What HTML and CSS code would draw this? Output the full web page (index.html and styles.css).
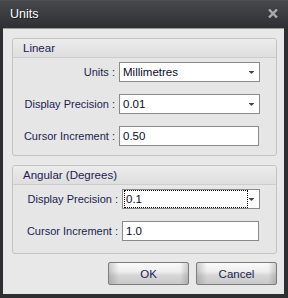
FILE: index.html
```html
<!DOCTYPE html>
<html>
<head>
<meta charset="utf-8">
<link rel="stylesheet" href="styles.css">
</head>
<body>
<div class="window">
  <div class="titlebar">
    <span class="title">Units</span>
    <svg class="close" width="10" height="9" viewBox="0 0 10 9"><path d="M1 0.5 L9 8.5 M9 0.5 L1 8.5" stroke="#a9abae" stroke-width="2.4" fill="none"/></svg>
  </div>
  <div class="content">
    <div class="group">
      <div class="group-head">Linear</div>
      <div class="group-body linear">
        <div class="row">
          <span class="label">Units :</span>
          <div class="select"><span class="value">Millimetres</span><svg class="arrow" width="5" height="3" viewBox="0 0 5 3"><path d="M0 0h5v1H0z M0.5 1h4L2.5 3z" fill="#444"/></svg></div>
        </div>
        <div class="row">
          <span class="label">Display Precision :</span>
          <div class="select"><span class="value">0.01</span><svg class="arrow" width="5" height="3" viewBox="0 0 5 3"><path d="M0 0h5v1H0z M0.5 1h4L2.5 3z" fill="#444"/></svg></div>
        </div>
        <div class="row">
          <span class="label">Cursor Increment :</span>
          <div class="input">0.50</div>
        </div>
      </div>
    </div>
    <div class="group angular">
      <div class="group-head">Angular (Degrees)</div>
      <div class="group-body">
        <div class="row">
          <span class="label">Display Precision :</span>
          <div class="select"><span class="value focus">0.1</span><svg class="arrow" width="5" height="3" viewBox="0 0 5 3"><path d="M0 0h5v1H0z M0.5 1h4L2.5 3z" fill="#444"/></svg></div>
        </div>
        <div class="row">
          <span class="label">Cursor Increment :</span>
          <div class="input">1.0</div>
        </div>
      </div>
    </div>
    <div class="buttons">
      <div class="btn">OK</div>
      <div class="btn">Cancel</div>
    </div>
  </div>
</div>
</body>
</html>
```
FILE: styles.css
```css
* { box-sizing: border-box; }
html, body { margin: 0; padding: 0; }
body { width: 288px; height: 298px; overflow: hidden; background: #2c2d30; font-family: "Liberation Sans", Arial, sans-serif; font-size: 11px; }

.window {
  width: 288px; height: 298px;
  background: #2e2f33;
  display: flex; flex-direction: column;
}
.titlebar {
  height: 28px; flex: none;
  background: linear-gradient(#55575b 0px, #46484c 1px, #3a3c40 14px, #2f3034 28px);
  display: flex; align-items: center; justify-content: space-between;
  padding: 0 10px 0 10px;
}
.title { color: #ffffff; font-size: 12.5px; text-shadow: 1px 1px 0 #1a1a1a; margin-top: -1px; }
.close { margin-top: -1px; }

.content {
  flex: none;
  margin: 0 4px 4px 3px;
  height: 266px;
  background: #e8e8e8;
  border-top: 1px solid #9c9c9c;
  padding: 9px 7px 9px 9px;
  display: flex; flex-direction: column;
}
.group {
  border: 1px solid #c3c3c3;
  border-radius: 3px;
  background: #e6e6e6;
}
.group.angular { margin-top: 9px; }
.group-head {
  height: 19px;
  border-bottom: 1px solid #cdcdcd;
  background: linear-gradient(#ececec, #dedede);
  border-radius: 2px 2px 0 0;
  color: #1c1c50;
  padding-left: 10px;
  line-height: 18px;
  font-size: 11.5px;
}
.group-body {
  display: flex; flex-direction: column; gap: 12px;
  padding: 4px 16px 12px 0;
}
.group-body.linear { padding-bottom: 9px; }
.row { display: flex; align-items: center; height: 20px; }
.label {
  width: 106px; flex: none;
  text-align: right; padding-right: 4px;
  color: #1c1c50; font-size: 11px;
}
.angular .label { width: 109px; }
.select, .input {
  height: 20px;
  border: 1px solid #8a8a8a;
  background: #ffffff;
  color: #0a0a28;
  font-size: 11.5px;
  display: flex; align-items: center;
}
.select { width: 141px; padding: 0 5px 0 2px; justify-content: space-between; }
.input { width: 140px; padding-left: 3px; }
.angular .select { width: 138px; }
.angular .input { width: 137px; }
.value { padding-left: 1px; line-height: 14px; }
.value.focus {
  outline: 1px dotted #000;
  outline-offset: 0;
  width: 122px; height: 16px; line-height: 16px;
}
.arrow { flex: none; }

.buttons {
  display: flex; justify-content: flex-end; gap: 7px;
  margin-top: 8px;
}
.btn {
  width: 81px; height: 23px;
  border: 1px solid #7c7c7c;
  border-radius: 2px;
  background:
    linear-gradient(90deg, rgba(120,120,120,0.35) 0px, rgba(120,120,120,0) 10px, rgba(120,120,120,0) 71px, rgba(120,120,120,0.35) 79px),
    linear-gradient(#fbfbfb 0%, #eeeeee 40%, #d6d6d6 60%, #c9c9c9 100%);
  color: #1c1c50;
  font-size: 11.5px;
  display: flex; align-items: center; justify-content: center;
}
```
